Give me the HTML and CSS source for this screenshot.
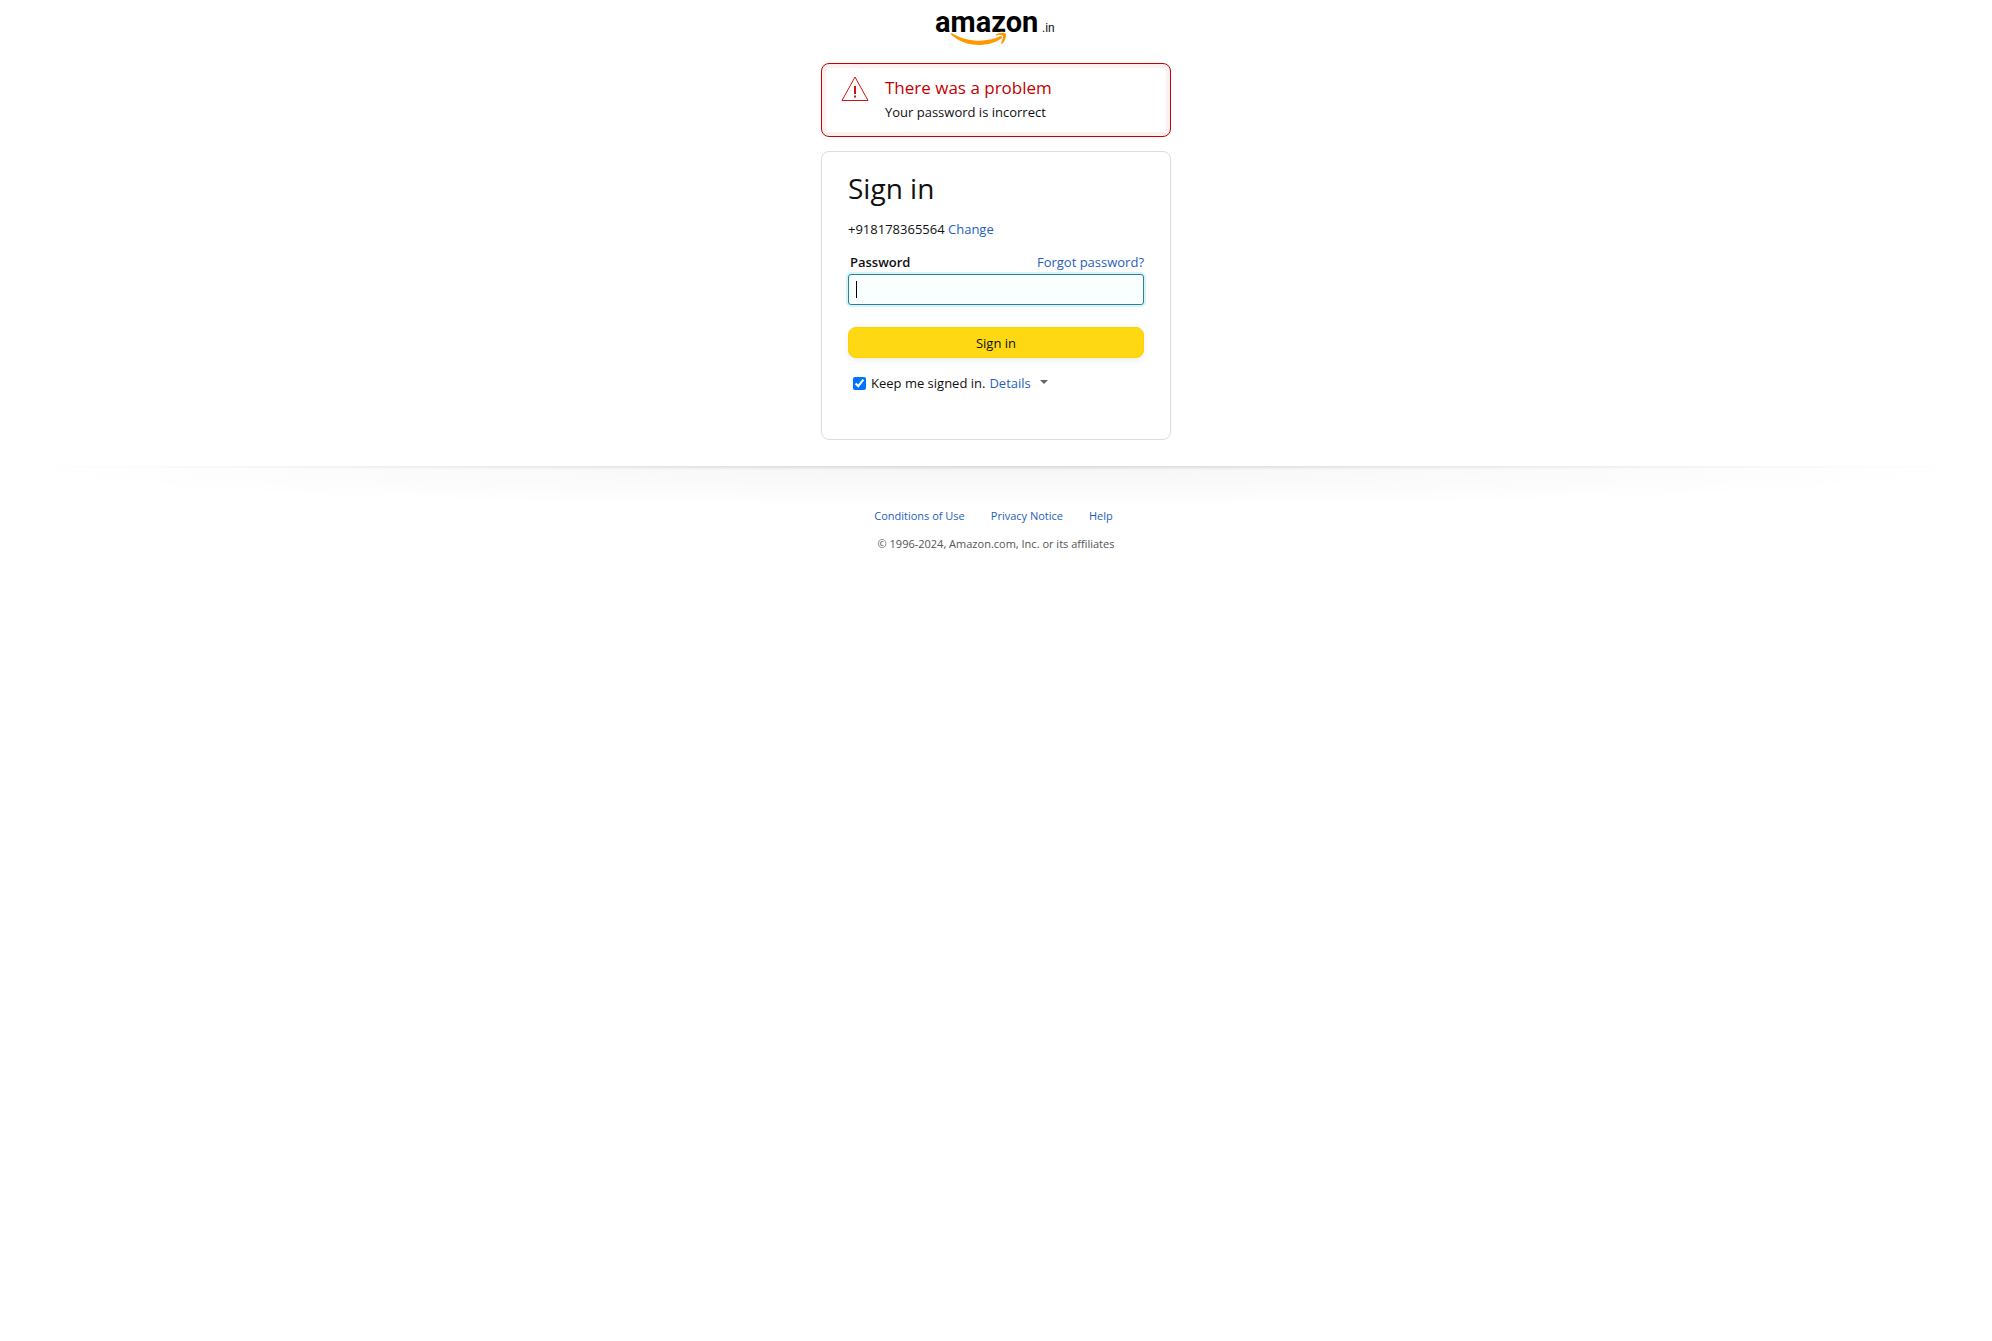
FILE: index.html
```html
<!DOCTYPE html>
<html lang="en">
<head>
<meta charset="utf-8">
<meta name="viewport" content="width=device-width, initial-scale=1">
<title>Amazon Sign In</title>
<link rel="stylesheet" href="styles.css">
</head>
<body>
<header class="header">
  <a class="logo" href="#" aria-label="Amazon.in">
    <svg width="124" height="40" viewBox="0 0 124 40">
      <text class="logo-name" x="1" y="24">amazon</text>
      <text class="logo-tld" x="108" y="24">.in</text>
      <path fill="#f90" d="M17 26.5C16 25.8 17 24.6 18.5 25.4C33 34 52 35 66 28.3C68 27.4 69.5 29 67.5 30.5C61 35 52 37 45 37C34 37 24 33 17 26.5Z"/>
      <path fill="#f90" stroke="#fff" stroke-width="2" paint-order="stroke" d="M62 26.6C64 24.8 70 24 71.7 25.4C73 27.5 71 33.5 68.3 35.6C67.5 36.2 66.8 35.8 67.2 34.8C68.3 32 69.6 28.8 68.8 27.8C68 26.8 65 27 62.8 27.5C61.8 27.7 61.2 27.2 62 26.6Z"/>
    </svg>
  </a>
</header>
<main class="main">
  <section class="alert" role="alert">
    <svg class="alert-icon" width="28" height="26" viewBox="0 0 28 26" fill="none" stroke="#d0160c">
      <path d="M14 1L27 24.5H1Z"/>
      <path stroke-width="2" d="M14 10V18M14 19.5V21.5"/>
    </svg>
    <div>
      <h4 class="alert-title">There was a problem</h4>
      <p class="alert-text">Your password is incorrect</p>
    </div>
  </section>
  <form class="card">
    <h1 class="title">Sign in</h1>
    <p class="account">+918178365564 <a href="#">Change</a></p>
    <div class="label-row">
      <label class="label" for="password">Password</label>
      <a href="#">Forgot password?</a>
    </div>
    <div class="field">
      <input class="input" id="password" type="password">
      <span class="caret"></span>
    </div>
    <button class="button" type="submit">Sign in</button>
    <div class="keep">
      <input class="check" id="keep" type="checkbox" checked>
      <label for="keep">Keep me signed in.</label>
      <a class="details" href="#">Details <span class="arrow"></span></a>
    </div>
  </form>
</main>
<footer class="footer">
  <nav class="links">
    <a href="#">Conditions of Use</a>
    <a href="#">Privacy Notice</a>
    <a href="#">Help</a>
  </nav>
  <p class="copyright">© 1996-2024, Amazon.com, Inc. or its affiliates</p>
</footer>
</body>
</html>
```
FILE: styles.css
```css
* { box-sizing: border-box; }
body {
  margin: 0;
  background: #fff;
  color: #0f1111;
  font-family: "Open Sans", "Noto Sans", sans-serif;
  font-size: 13px;
  line-height: 20px;
}
h1, h4, p { margin: 0; font-weight: 400; }
a { color: #1f60bd; text-decoration: none; }
.header { display: flex; justify-content: center; padding: 8px 0 15px; }
.logo { display: block; height: 40px; }
.logo svg { display: block; }
.logo-name { font: 700 29px Roboto, sans-serif; fill: #000; }
.logo-tld { font: 400 12px Roboto, sans-serif; fill: #111; }
.main {
  display: flex;
  flex-direction: column;
  gap: 14px;
  width: 100%;
  max-width: 350px;
  margin: 0 auto;
}
.alert {
  display: flex;
  gap: 16px;
  padding: 12px 19px 14px;
  border: 1px solid #c40000;
  border-radius: 8px;
  box-shadow: inset 0 0 0 4px #fcf0f1;
}
.alert-title { color: #c40000; font-size: 17px; line-height: 24px; }
.alert-text { margin-top: 2px; }
.card {
  padding: 18px 26px 46px;
  border: 1px solid #ddd;
  border-radius: 8px;
}
.title { font-size: 28px; line-height: 36px; }
.account { margin-top: 13px; }
.label-row { display: flex; justify-content: space-between; margin-top: 13px; padding-left: 2px; }
.label { font-weight: 600; }
.field { position: relative; margin-top: 2px; }
.input {
  display: block;
  width: 100%;
  height: 31px;
  padding: 3px 7px;
  border: 1px solid #2a818f;
  border-radius: 3px;
  outline: 0;
  background: #f9feff;
  box-shadow: 0 0 0 2px #d5f4fa;
  font: inherit;
}
.caret { position: absolute; left: 8px; top: 7px; width: 1px; height: 17px; background: #000; }
.button {
  display: block;
  width: 100%;
  height: 31px;
  margin-top: 22px;
  padding: 0;
  border: 1px solid #fcd200;
  border-radius: 8px;
  background: #ffd814;
  box-shadow: 0 2px 5px rgba(213, 217, 217, .5);
  color: #0f1111;
  font: inherit;
}
.keep { display: flex; align-items: center; gap: 4px; margin-top: 15px; padding-left: 5px; }
.check { width: 13px; height: 13px; margin: 0 1px 0 0; }
.details { display: flex; align-items: center; gap: 9px; }
.arrow { border: solid transparent; border-width: 4px 4px 0; border-top-color: #666; margin-bottom: 2px; }
.footer {
  display: flex;
  flex-direction: column;
  align-items: center;
  gap: 12px;
  margin-top: 26px;
  padding-top: 42px;
  background:
    radial-gradient(ellipse 50% 4px at 50% 0, rgba(0, 0, 0, .12), transparent) no-repeat,
    radial-gradient(ellipse 50% 42px at 50% 0, rgba(0, 0, 0, .04), transparent) no-repeat;
  font-size: 11px;
  line-height: 16px;
}
.links { display: flex; gap: 26px; margin-right: 5px; }
.copyright { color: #555; }
```
